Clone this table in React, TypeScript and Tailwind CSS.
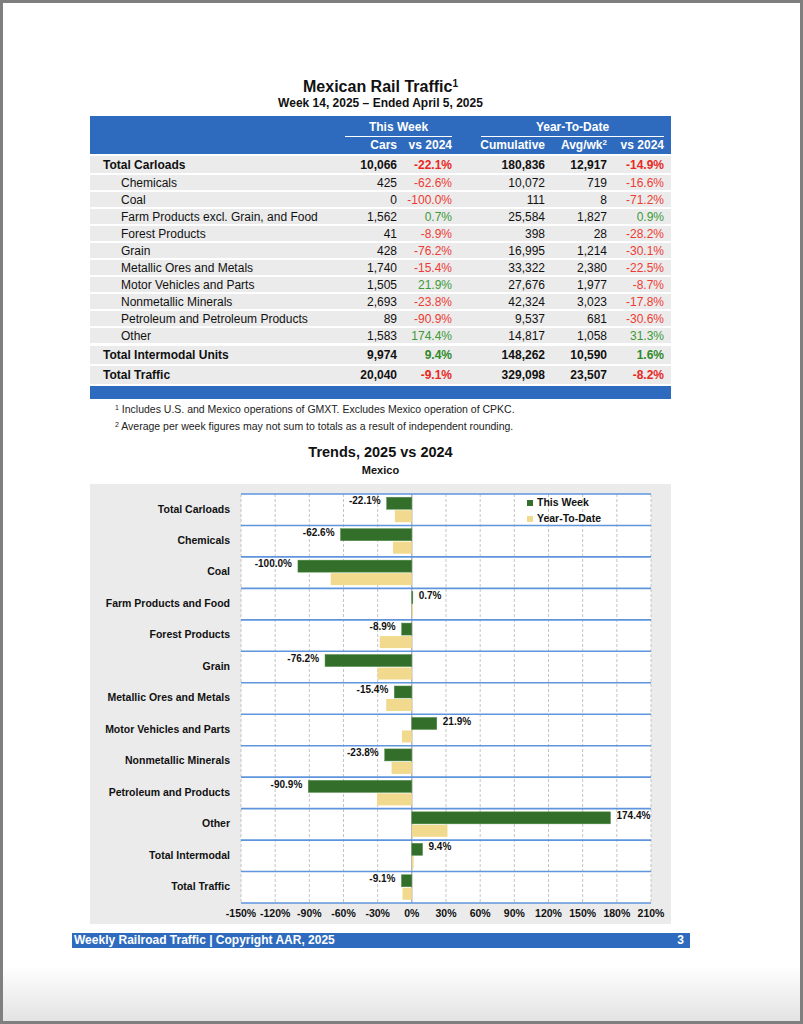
const rows = [
  { label: "Total Carloads", cars: "10,066", wk: "-22.1%", cum: "180,836", avg: "12,917", ytd: "-14.9%", bold: true },
  { label: "Chemicals", cars: "425", wk: "-62.6%", cum: "10,072", avg: "719", ytd: "-16.6%" },
  { label: "Coal", cars: "0", wk: "-100.0%", cum: "111", avg: "8", ytd: "-71.2%" },
  { label: "Farm Products excl. Grain, and Food", cars: "1,562", wk: "0.7%", cum: "25,584", avg: "1,827", ytd: "0.9%" },
  { label: "Forest Products", cars: "41", wk: "-8.9%", cum: "398", avg: "28", ytd: "-28.2%" },
  { label: "Grain", cars: "428", wk: "-76.2%", cum: "16,995", avg: "1,214", ytd: "-30.1%" },
  { label: "Metallic Ores and Metals", cars: "1,740", wk: "-15.4%", cum: "33,322", avg: "2,380", ytd: "-22.5%" },
  { label: "Motor Vehicles and Parts", cars: "1,505", wk: "21.9%", cum: "27,676", avg: "1,977", ytd: "-8.7%" },
  { label: "Nonmetallic Minerals", cars: "2,693", wk: "-23.8%", cum: "42,324", avg: "3,023", ytd: "-17.8%" },
  { label: "Petroleum and Petroleum Products", cars: "89", wk: "-90.9%", cum: "9,537", avg: "681", ytd: "-30.6%" },
  { label: "Other", cars: "1,583", wk: "174.4%", cum: "14,817", avg: "1,058", ytd: "31.3%" },
]

const totals = [
  { label: "Total Intermodal Units", cars: "9,974", wk: "9.4%", cum: "148,262", avg: "10,590", ytd: "1.6%" },
  { label: "Total Traffic", cars: "20,040", wk: "-9.1%", cum: "329,098", avg: "23,507", ytd: "-8.2%" },
]

const trends: [string, number, number][] = [
  ["Total Carloads", -22.1, -14.9],
  ["Chemicals", -62.6, -16.6],
  ["Coal", -100.0, -71.2],
  ["Farm Products and Food", 0.7, 0.9],
  ["Forest Products", -8.9, -28.2],
  ["Grain", -76.2, -30.1],
  ["Metallic Ores and Metals", -15.4, -22.5],
  ["Motor Vehicles and Parts", 21.9, -8.7],
  ["Nonmetallic Minerals", -23.8, -17.8],
  ["Petroleum and Products", -90.9, -30.6],
  ["Other", 174.4, 31.3],
  ["Total Intermodal", 9.4, 1.6],
  ["Total Traffic", -9.1, -8.2],
]

const cols = "grid grid-cols-[255px_52px_55px_93px_62px_57px] pr-[7px]"

function pct(v: string, bold?: boolean) {
  const neg = v.startsWith("-")
  if (bold) return neg ? "text-[#e8281f]" : "text-[#2f8a2a]"
  return neg ? "text-[#ee3b33]" : "text-[#3c9a36]"
}

function DataRow({ r, bold, h }: { r: (typeof rows)[number]; bold?: boolean; h: string }) {
  return (
    <div className={`${cols} ${h} items-center bg-[#ebebeb] leading-none ${bold ? "font-bold" : ""}`}>
      <div className={bold ? "pl-[13px]" : "pl-[31px]"}>{r.label}</div>
      <div className="text-right">{r.cars}</div>
      <div className={`text-right ${pct(r.wk, bold)}`}>{r.wk}</div>
      <div className="text-right">{r.cum}</div>
      <div className="text-right">{r.avg}</div>
      <div className={`text-right ${pct(r.ytd, bold)}`}>{r.ytd}</div>
    </div>
  )
}

function TrendChart() {
  const L = 151
  const R = 561
  const T = 10
  const B = 419
  const sx = (R - L) / 360
  const x = (v: number) => L + (v + 150) * sx
  const ch = (B - T) / 13
  const ticks = [-150, -120, -90, -60, -30, 0, 30, 60, 90, 120, 150, 180, 210]
  const font = "'Liberation Sans', Arial, sans-serif"

  return (
    <svg width="581" height="440" viewBox="0 0 581 440" fontFamily={font} fontWeight="bold">
      <rect x={L} y={T} width={R - L} height={B - T} fill="#ffffff" />
      {ticks.map((t) =>
        t === 0 ? null : (
          <line key={t} x1={x(t)} x2={x(t)} y1={T} y2={B} stroke="#c4c4c4" strokeWidth="1" strokeDasharray="3 2" />
        ),
      )}
      <line x1={x(0)} x2={x(0)} y1={T} y2={B} stroke="#8f8f8f" strokeWidth="1" />
      {trends.map(([name, wk, ytd], i) => {
        const c = T + i * ch + ch / 2
        const gx = Math.min(x(0), x(wk))
        const yx = Math.min(x(0), x(ytd))
        return (
          <g key={name}>
            <rect x={gx} y={c - 12.5} width={Math.max(Math.abs(x(wk) - x(0)), 1)} height="12" fill="#336f2b" stroke="#4f8a45" strokeWidth="0.5" />
            <rect x={yx} y={c + 0.5} width={Math.max(Math.abs(x(ytd) - x(0)), 1)} height="12" fill="#f1da8e" />
            <text x={140} y={c} textAnchor="end" dominantBaseline="middle" fontSize="10.5" fill="#111">
              {name}
            </text>
            <text
              x={wk < 0 ? x(wk) - 6 : x(wk) + 6}
              y={c - 8}
              textAnchor={wk < 0 ? "end" : "start"}
              dominantBaseline="middle"
              fontSize="10"
              fill="#111"
            >
              {wk.toFixed(1)}%
            </text>
          </g>
        )
      })}
      {Array.from({ length: 14 }).map((_, i) => (
        <line key={i} x1={L} x2={R} y1={T + i * ch} y2={T + i * ch} stroke="#5e95dc" strokeWidth="1.6" />
      ))}
      <rect x="437" y="16" width="6" height="6" fill="#336f2b" />
      <text x="447" y="19.5" dominantBaseline="middle" fontSize="10.5" fill="#111">
        This Week
      </text>
      <rect x="437" y="32" width="6" height="6" fill="#f1da8e" />
      <text x="447" y="35.5" dominantBaseline="middle" fontSize="10.5" fill="#111">
        Year-To-Date
      </text>
      {ticks.map((t) => (
        <text key={t} x={x(t)} y={430} textAnchor="middle" dominantBaseline="middle" fontSize="10.5" fill="#111">
          {t}%
        </text>
      ))}
    </svg>
  )
}

export default function App() {
  return (
    <div className="w-[803px] h-[1024px] border-[3px] border-[#7f7f7f] bg-[linear-gradient(to_bottom,#ffffff_0%,#ffffff_94.5%,#e3e3e3_100%)] font-['Liberation_Sans',Arial,sans-serif] text-[#111]">
      <div className="ml-[87px] w-[581px] pt-[75px]">
        {/* Title */}
        <h1 className="text-center text-[16px] font-bold leading-[18px]">
          Mexican Rail Traffic<sup className="text-[10px]">1</sup>
        </h1>
        <div className="text-center text-[12px] font-bold leading-[14px]">Week 14, 2025 – Ended April 5, 2025</div>

        {/* Table */}
        <div className="mt-[6px] text-[12px]">
          <div className="bg-[#2e6bbe] pt-[4px] font-bold text-white">
            <div className={cols}>
              <div />
              <div className="col-span-2 border-b-[1.5px] border-white pb-[1px] text-center leading-[15px]">This Week</div>
              <div className="col-span-3 ml-[29px] border-b-[1.5px] border-white pb-[1px] text-center leading-[15px]">
                Year-To-Date
              </div>
            </div>
            <div className={`${cols} pt-[1px] pb-[1px] leading-[15px]`}>
              <div />
              <div className="text-right">Cars</div>
              <div className="text-right">vs 2024</div>
              <div className="text-right">Cumulative</div>
              <div className="text-right">
                Avg/wk<sup className="text-[8px]">2</sup>
              </div>
              <div className="text-right">vs 2024</div>
            </div>
          </div>
          <div className="mt-[2px] flex flex-col gap-[2px]">
            {rows.map((r) => (
              <DataRow key={r.label} r={r} bold={r.bold} h={r.bold ? "h-[17px]" : "h-[15px]"} />
            ))}
            <div className="mt-[1px]">
              <DataRow r={totals[0]} bold h="h-[18px]" />
            </div>
            <DataRow r={totals[1]} bold h="h-[18px]" />
            <div className="h-[13px] bg-[#2e6bbe]" />
          </div>
        </div>

        {/* Footnotes */}
        <div className="mt-[2px] pl-[25px] text-[10.5px] leading-[17px] text-[#222]">
          <p>
            <sup className="text-[7px]">1</sup> Includes U.S. and Mexico operations of GMXT. Excludes Mexico operation of CPKC.
          </p>
          <p>
            <sup className="text-[7px]">2</sup> Average per week figures may not sum to totals as a result of independent rounding.
          </p>
        </div>

        {/* Chart */}
        <h2 className="mt-[8px] text-center text-[14.5px] font-bold leading-[18px]">Trends, 2025 vs 2024</h2>
        <div className="mt-[2px] text-center text-[11px] font-bold leading-[14px]">Mexico</div>
        <div className="mt-[7px] h-[440px] bg-[#ebebeb]">
          <TrendChart />
        </div>
      </div>

      {/* Footer */}
      <div className="ml-[69px] mt-[9px] flex h-[15px] w-[618px] items-center justify-between bg-[#2e6bbe] pl-[2px] pr-[6px] text-[12px] font-bold leading-[15px] text-white">
        <span>Weekly Railroad Traffic | Copyright AAR, 2025</span>
        <span>3</span>
      </div>
    </div>
  )
}
